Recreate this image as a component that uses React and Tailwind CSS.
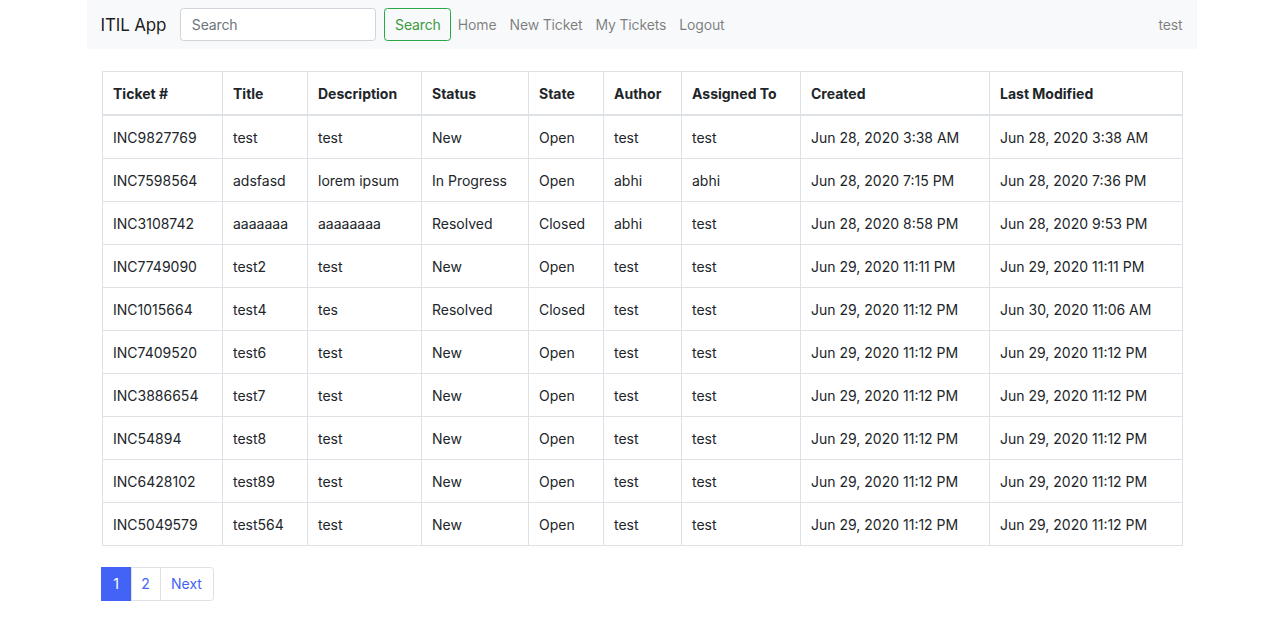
const tickets = [
  ['INC9827769', 'test', 'test', 'New', 'Open', 'test', 'test', 'Jun 28, 2020 3:38 AM', 'Jun 28, 2020 3:38 AM'],
  ['INC7598564', 'adsfasd', 'lorem ipsum', 'In Progress', 'Open', 'abhi', 'abhi', 'Jun 28, 2020 7:15 PM', 'Jun 28, 2020 7:36 PM'],
  ['INC3108742', 'aaaaaaa', 'aaaaaaaa', 'Resolved', 'Closed', 'abhi', 'test', 'Jun 28, 2020 8:58 PM', 'Jun 28, 2020 9:53 PM'],
  ['INC7749090', 'test2', 'test', 'New', 'Open', 'test', 'test', 'Jun 29, 2020 11:11 PM', 'Jun 29, 2020 11:11 PM'],
  ['INC1015664', 'test4', 'tes', 'Resolved', 'Closed', 'test', 'test', 'Jun 29, 2020 11:12 PM', 'Jun 30, 2020 11:06 AM'],
  ['INC7409520', 'test6', 'test', 'New', 'Open', 'test', 'test', 'Jun 29, 2020 11:12 PM', 'Jun 29, 2020 11:12 PM'],
  ['INC3886654', 'test7', 'test', 'New', 'Open', 'test', 'test', 'Jun 29, 2020 11:12 PM', 'Jun 29, 2020 11:12 PM'],
  ['INC54894', 'test8', 'test', 'New', 'Open', 'test', 'test', 'Jun 29, 2020 11:12 PM', 'Jun 29, 2020 11:12 PM'],
  ['INC6428102', 'test89', 'test', 'New', 'Open', 'test', 'test', 'Jun 29, 2020 11:12 PM', 'Jun 29, 2020 11:12 PM'],
  ['INC5049579', 'test564', 'test', 'New', 'Open', 'test', 'test', 'Jun 29, 2020 11:12 PM', 'Jun 29, 2020 11:12 PM'],
]

const headers = ['Ticket #', 'Title', 'Description', 'Status', 'State', 'Author', 'Assigned To', 'Created', 'Last Modified']
const widths = [120, 85, 114, 107, 75, 78, 119, 189, 193]

export default function App() {
  return (
    <div className="min-h-screen bg-white text-[14px] leading-[21px] text-[#212529]" style={{ fontFamily: 'Inter, "Noto Sans", sans-serif' }}>
      <div className="w-[1110px] mx-auto">
        <nav className="flex items-center bg-[#f8f9fa] px-[14px] h-[49px] tracking-[-0.15px]">
          <span className="text-[17px] leading-[26px] text-black/90 mr-[14px]">ITIL App</span>
          <input
            placeholder="Search"
            className="w-[196px] h-[33px] px-[10.5px] border border-[#ced4da] rounded-[3.5px] bg-white text-[14px] placeholder:text-[#6c757d] outline-none mr-2"
          />
          <button className="h-[33px] w-[67px] border border-[#28a745] text-[#3d9b3d] rounded-[3.5px] text-[14px]">
            Search
          </button>
          <div className="flex">
            {['Home', 'New Ticket', 'My Tickets', 'Logout'].map((l) => (
              <a key={l} className="px-[6.5px] text-black/50">{l}</a>
            ))}
          </div>
          <span className="ml-auto text-black/50">test</span>
        </nav>

        <div className="px-[15px] mt-[22px]">
          <table className="w-[1080px] table-fixed border-collapse border border-[#dee2e6]">
            <colgroup>
              {widths.map((w, i) => (
                <col key={i} style={{ width: w }} />
              ))}
            </colgroup>
            <thead>
              <tr>
                {headers.map((h) => (
                  <th key={h} className="text-left font-bold px-[10.5px] py-[10.5px] border border-[#dee2e6] border-b-2">
                    {h}
                  </th>
                ))}
              </tr>
            </thead>
            <tbody>
              {tickets.map((row) => (
                <tr key={row[0]}>
                  {row.map((c, i) => (
                    <td key={i} className="px-[10.5px] py-[10.5px] border border-[#dee2e6] whitespace-nowrap">
                      {c}
                    </td>
                  ))}
                </tr>
              ))}
            </tbody>
          </table>

          <ul className="flex mt-[21px] -ml-px leading-[17.5px] text-center">
            <li className="w-[31px] py-[7px] border border-[#4263f5] bg-[#4263f5] text-white">1</li>
            <li className="w-[30px] py-[7px] border border-[#dee2e6] -ml-px text-[#4263f5]">2</li>
            <li className="w-[54px] py-[7px] border border-[#dee2e6] -ml-px text-[#4263f5] rounded-r-[3.5px]">Next</li>
          </ul>
        </div>
      </div>
    </div>
  )
}
